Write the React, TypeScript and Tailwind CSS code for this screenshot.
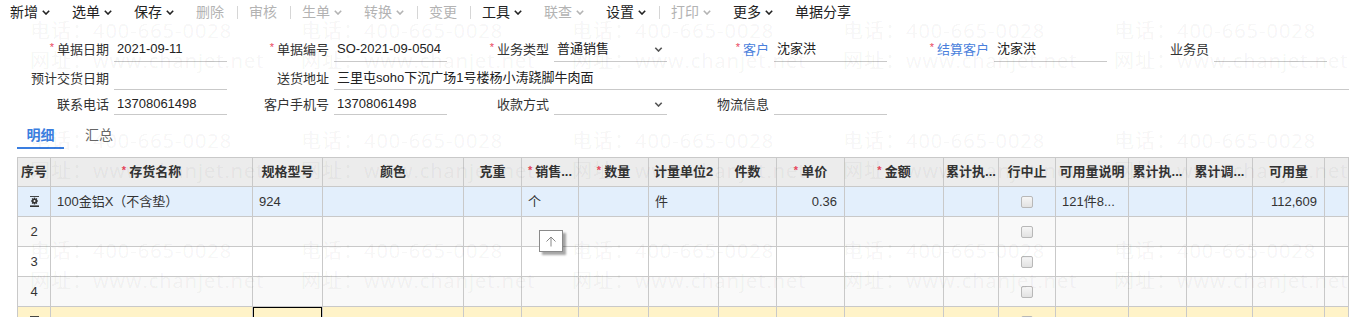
import React from "react";

type Tool = { label: string; off?: boolean; menu?: boolean; sep?: boolean };

const tools: Tool[] = [
  { label: "新增", menu: true },
  { label: "选单", menu: true },
  { label: "保存", menu: true },
  { label: "删除", off: true, sep: true },
  { label: "审核", off: true, sep: true },
  { label: "生单", off: true, menu: true },
  { label: "转换", off: true, menu: true, sep: true },
  { label: "变更", off: true, sep: true },
  { label: "工具", menu: true },
  { label: "联查", off: true, menu: true },
  { label: "设置", menu: true, sep: true },
  { label: "打印", off: true, menu: true },
  { label: "更多", menu: true },
  { label: "单据分享" },
];

const Chevron = ({ className }: { className?: string }) => (
  <svg width="8" height="5" viewBox="0 0 8 5" className={className}>
    <path d="M0.8 0.8 L4 4 L7.2 0.8" fill="none" stroke="currentColor" strokeWidth="1.6" />
  </svg>
);

const Star = () => (
  <span className="text-[11px] leading-none text-[#e9475c] relative -top-[2px] mr-[3px]">*</span>
);

const GearIcon = () => (
  <svg width="9" height="11" viewBox="0 0 9 11">
    <rect x="0" y="0" width="9" height="0.9" fill="#333" />
    <g transform="translate(4.5 5)" fill="#333">
      <rect x="-0.7" y="-3.4" width="1.4" height="6.8" />
      <rect x="-0.7" y="-3.4" width="1.4" height="6.8" transform="rotate(45)" />
      <rect x="-0.7" y="-3.4" width="1.4" height="6.8" transform="rotate(90)" />
      <rect x="-0.7" y="-3.4" width="1.4" height="6.8" transform="rotate(135)" />
      <circle r="2.6" />
      <circle r="1" fill="#fff" />
    </g>
    <rect x="0" y="9.4" width="9" height="1.6" fill="#333" />
  </svg>
);

const Checkbox = () => (
  <span className="block w-[12px] h-[12px] rounded-[2px] border border-[#b8b8b8] bg-gradient-to-b from-[#f6f6f6] to-[#e2e2e2]" />
);

type FieldProps = {
  label: string;
  req?: boolean;
  blue?: boolean;
  value?: string;
  select?: boolean;
  wide?: boolean;
};

function Field({ label, req, blue, value, select, wide }: FieldProps) {
  return (
    <div className={wide ? "flex flex-1" : "flex w-[220px]"}>
      <div className="w-[107px] flex items-center justify-end pr-[5px] whitespace-nowrap">
        {req && <Star />}
        <span className={blue ? "text-[#4a7fdc]" : "text-[#333]"}>{label}</span>
      </div>
      <div
        className={
          (wide ? "flex-1" : "w-[113px]") +
          " flex items-center justify-between border-b border-[#c9c9c9] pl-[3px] pr-[4px] text-[#222] whitespace-nowrap"
        }
      >
        <span>{value}</span>
        {select && <Chevron className="text-[#555] w-[9px] h-[5px]" />}
      </div>
    </div>
  );
}

type Col = { title: string; req?: boolean };

const cols: Col[] = [
  { title: "序号" },
  { title: "存货名称", req: true },
  { title: "规格型号" },
  { title: "颜色" },
  { title: "克重" },
  { title: "销售...", req: true },
  { title: "数量", req: true },
  { title: "计量单位2" },
  { title: "件数" },
  { title: "单价", req: true },
  { title: "金额", req: true },
  { title: "累计执..." },
  { title: "行中止" },
  { title: "可用量说明" },
  { title: "累计执..." },
  { title: "累计调..." },
  { title: "可用量" },
  { title: "" },
];

const GRID =
  "grid grid-cols-[34px_202px_70px_141px_58px_57px_70px_70px_58px_68px_99px_55px_57px_73px_58px_66px_72px_1fr]";

const cell = "border-r border-b border-[#c9c9c9] flex items-center px-[6px] whitespace-nowrap overflow-hidden";

type RowData = {
  bg: string;
  no?: string;
  icon?: boolean;
  values?: Record<number, string>;
  selected?: number;
};

const rows: RowData[] = [
  {
    bg: "bg-[#e3effc]",
    icon: true,
    values: { 1: "100金铝X（不含垫）", 2: "924", 5: "个", 7: "件", 9: "0.36", 13: "121件8...", 16: "112,609" },
  },
  { bg: "bg-[#f9f9f9]", no: "2" },
  { bg: "bg-white", no: "3" },
  { bg: "bg-[#f9f9f9]", no: "4" },
  { bg: "bg-[#fff3c8]", icon: true, selected: 2 },
];

const rightCols = [9, 10, 16];

function Row({ r }: { r: RowData }) {
  return (
    <div className={GRID + " h-[30px] " + r.bg}>
      {cols.map((_, i) => {
        let content: React.ReactNode = r.values?.[i] ?? null;
        let cls = cell;
        if (i === 0) {
          cls += " border-l justify-center px-0";
          content = r.icon ? <GearIcon /> : r.no;
        }
        if (i === 12) {
          cls += " justify-center";
          content = <Checkbox />;
        }
        if (rightCols.includes(i)) cls += " justify-end pr-[7px]";
        if (r.selected === i) cls += " shadow-[inset_0_0_0_1px_#000]";
        return (
          <div key={i} className={cls}>
            {content}
          </div>
        );
      })}
    </div>
  );
}

export default function App() {
  return (
    <div className="relative w-[1349px] h-[317px] overflow-hidden bg-white text-[13px] text-[#333] font-['Liberation_Sans','Noto_Sans_CJK_SC',sans-serif]">
      {/* toolbar */}
      <div className="flex items-center h-[25px] text-[14px]">
        {tools.map((t) => (
          <React.Fragment key={t.label}>
            <div
              className={
                "flex items-center gap-[4px] pl-[10px] pr-[12px] " + (t.off ? "text-[#b3b3b3]" : "text-[#222]")
              }
            >
              <span>{t.label}</span>
              {t.menu && <Chevron />}
            </div>
            {t.sep && <div className="w-px h-[13px] mx-[1px] bg-[#d6d6d6]" />}
          </React.Fragment>
        ))}
      </div>

      {/* header form */}
      <div className="pl-[7px]">
        <div className="flex h-[25px] mt-[12px]">
          <Field label="单据日期" req value="2021-09-11" />
          <Field label="单据编号" req value="SO-2021-09-0504" />
          <Field label="业务类型" req value="普通销售" select />
          <Field label="客户" req blue value="沈家洪" />
          <Field label="结算客户" req blue value="沈家洪" />
          <Field label="业务员" />
        </div>
        <div className="flex h-[23px] mt-[5px]">
          <Field label="预计交货日期" />
          <Field label="送货地址" wide value="三里屯soho下沉广场1号楼杨小涛跷脚牛肉面" />
        </div>
        <div className="flex h-[21px] mt-[4px]">
          <Field label="联系电话" value="13708061498" />
          <Field label="客户手机号" value="13708061498" />
          <Field label="收款方式" select />
          <Field label="物流信息" />
        </div>
      </div>

      {/* tabs */}
      <div className="flex pl-[17px] text-[14px] gap-[12px]">
        <div className="w-[47px] pt-[12px] pb-[4px] leading-[16px] text-center font-bold text-[#3a7ee0] border-b-2 border-[#3a7ee0]">
          明细
        </div>
        <div className="px-[9px] pt-[12px] leading-[16px] text-[#666]">汇总</div>
      </div>

      {/* grid */}
      <div className="ml-[17px] mt-[8px] w-[1332px] border-t border-[#c9c9c9]">
        <div className={GRID + " h-[29px] bg-[#ececec] font-bold text-[#333]"}>
          {cols.map((c, i) => (
            <div key={i} className={cell + " justify-center px-[2px]" + (i === 0 ? " border-l" : "")}>
              {c.req && <Star />}
              {c.title}
            </div>
          ))}
        </div>
        {rows.map((r, i) => (
          <Row key={i} r={r} />
        ))}
      </div>

      {/* cell popup */}
      <div className="absolute left-[539px] top-[230px] w-[24px] h-[22px] bg-white border border-[#8a8a8a] shadow-[3px_3px_2px_rgba(0,0,0,0.35)] flex items-center justify-center">
        <svg width="12" height="11" viewBox="0 0 12 11">
          <path d="M6 1 V10.5 M1.5 5.5 L6 1 L10.5 5.5" fill="none" stroke="#888" strokeWidth="1" />
        </svg>
      </div>

      {/* watermark */}
      <div className="pointer-events-none absolute left-[30px] top-[16px] grid grid-cols-[repeat(5,271px)] auto-rows-[110px] font-['Open_Sans','Noto_Sans_CJK_SC',sans-serif] text-[20px] leading-[30px] tracking-[1px] text-[rgba(0,0,0,0.055)] whitespace-nowrap">
        {Array.from({ length: 15 }).map((_, i) => (
          <div key={i}>
            <div>电话：400-665-0028</div>
            <div>网址：www.chanjet.net</div>
          </div>
        ))}
      </div>
    </div>
  );
}
